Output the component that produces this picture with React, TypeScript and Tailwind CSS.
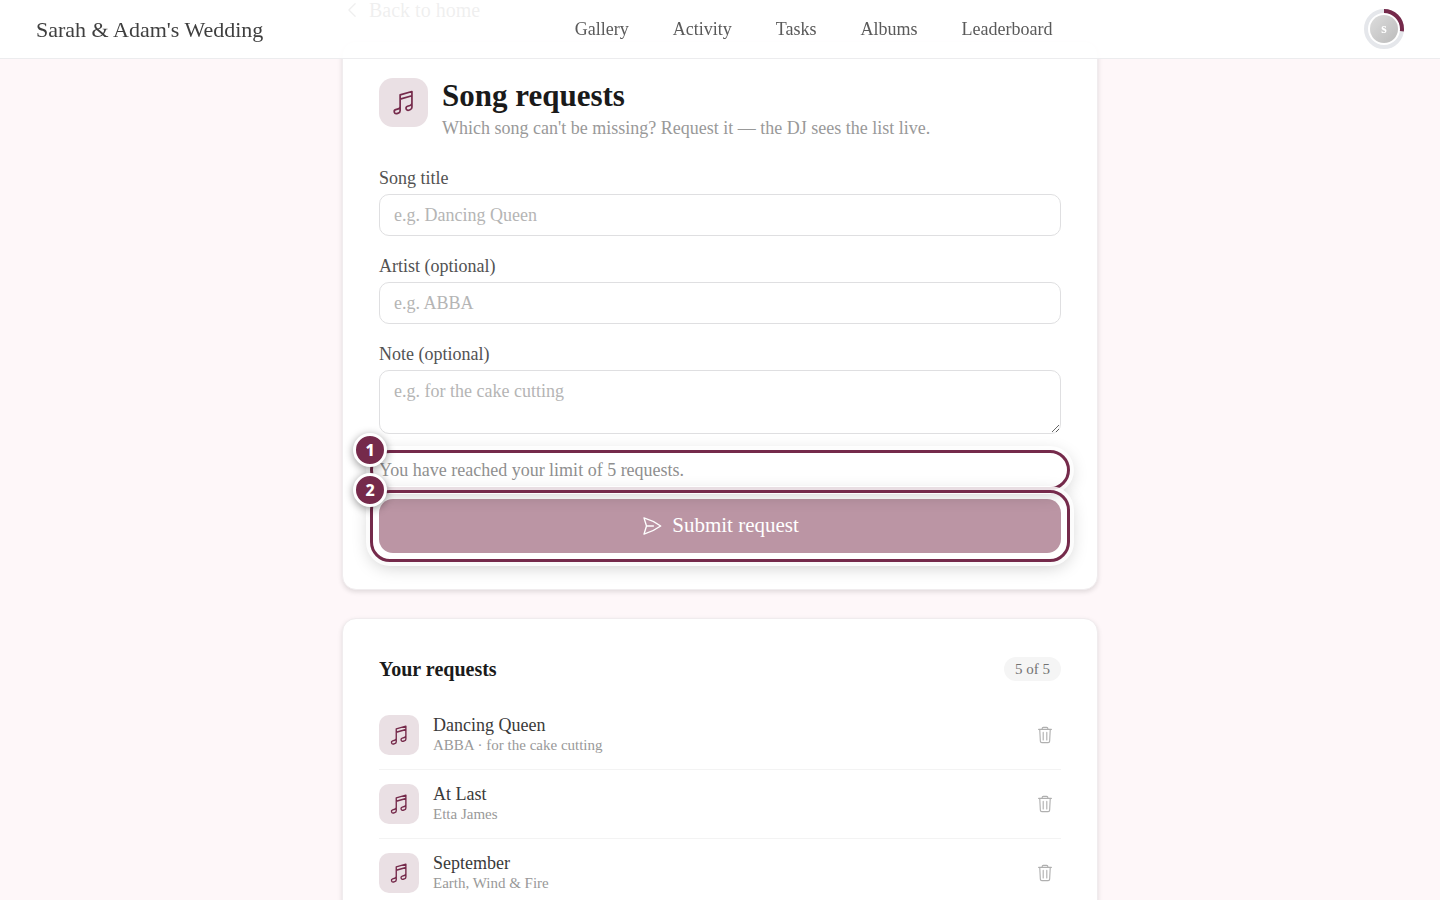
import React, { useState } from 'react';
import { HiOutlineChevronLeft, HiOutlineMusicalNote, HiOutlinePaperAirplane } from 'react-icons/hi2';

interface SongRequest {
    id: number;
    title: string;
    details: string;
}

const MAX_REQUESTS = 5;

const navItems = ['Gallery', 'Activity', 'Tasks', 'Albums', 'Leaderboard'];

const initialRequests: SongRequest[] = [
    { id: 1, title: 'Dancing Queen', details: 'ABBA · for the cake cutting' },
    { id: 2, title: 'At Last', details: 'Etta James' },
    { id: 3, title: 'September', details: 'Earth, Wind & Fire' },
];

const TrashIcon: React.FC<{ className?: string }> = ({ className }) => (
    <svg viewBox="0 0 24 24" fill="none" stroke="currentColor" strokeWidth={1.5} strokeLinecap="round" strokeLinejoin="round" className={className} aria-hidden="true">
        <path d="M3.5 4.5h17M8.2 4.5V3.4A1.6 1.6 0 0 1 9.8 1.8h4.4a1.6 1.6 0 0 1 1.6 1.6v1.1M5 4.5l.8 15.7a2 2 0 0 0 2 1.9h8.4a2 2 0 0 0 2-1.9L19 4.5M9.6 8.5v10M14.4 8.5v10" />
    </svg>
);

const ProfileBadge: React.FC = () => (
    <button type="button" aria-label="Profile" className="relative flex h-10 w-10 items-center justify-center">
        <svg viewBox="0 0 40 40" className="absolute inset-0 h-10 w-10 -rotate-90" aria-hidden="true">
            <circle cx="20" cy="20" r="18" fill="none" stroke="#e5e7eb" strokeWidth="4" />
            <circle cx="20" cy="20" r="18" fill="none" stroke="#752a4b" strokeWidth="4" pathLength={100} strokeDasharray="27 73" />
        </svg>
        <span className="flex h-7 w-7 items-center justify-center rounded-full bg-linear-to-br from-[#dddddd] to-[#bbbbbb] text-sm font-bold text-white">s</span>
    </button>
);

const Header: React.FC = () => (
    <header className="fixed inset-x-0 top-0 z-40 border-b border-[#ececee] bg-white/92">
        <div className="flex h-[58px] items-center justify-between px-9">
            <a href="#home" className="text-[22px] text-[#3f3f3f]">Sarah &amp; Adam's Wedding</a>
            <nav className="flex gap-11">
                {navItems.map(item => (
                    <a key={item} href={`#${item.toLowerCase()}`} className="text-lg text-[#5a5a5a]">{item}</a>
                ))}
            </nav>
            <ProfileBadge />
        </div>
    </header>
);

const Highlight: React.FC<{ step: number; className: string }> = ({ step, className }) => (
    <div className={`pointer-events-none absolute -inset-x-[9px] rounded-[20px] border-3 border-[#752a4b] shadow-[0_0_0_4px_rgba(255,255,255,0.85),0_4px_18px_rgba(0,0,0,0.22)] ${className}`}>
        <span className="absolute -top-5 -left-5 flex h-[34px] w-[34px] items-center justify-center rounded-full border-3 border-white bg-[#752a4b] font-['Noto_Sans',sans-serif] text-base font-extrabold text-white shadow-[0_2px_8px_rgba(0,0,0,0.4)]">
            {step}
        </span>
    </div>
);

const fieldClass = 'block w-full rounded-[10px] border border-[#dfdfe1] bg-white px-[14px] text-lg leading-6 text-[#3f3f3f] placeholder:text-[#b5b5b5] focus:outline-none focus:ring-2 focus:ring-[#752a4b]';
const labelClass = 'mb-1 block text-lg leading-6 text-[#525252]';
const cardClass = 'rounded-[14px] border border-[#f0ecee] bg-white p-9 shadow-[0_2px_5px_rgba(0,0,0,0.12)]';

const App: React.FC = () => {
    const [requests, setRequests] = useState(initialRequests);

    const handleDelete = (id: number) => {
        setRequests(requests.filter(request => request.id !== id));
    };

    return (
        <div className="h-screen overflow-hidden bg-[#fef7f9] font-['Liberation_Serif',serif]">
            <Header />
            <main className="mx-auto max-w-[756px]">
                <a href="#home" className="flex items-center gap-[7px] text-xl leading-5 text-[#333333]">
                    <HiOutlineChevronLeft className="h-5 w-5" />
                    Back to home
                </a>

                <section className={`mt-[21px] ${cardClass}`}>
                    <div className="flex items-start gap-[14px]">
                        <div className="flex h-[49px] w-[49px] items-center justify-center rounded-[14px] bg-[#eae0e4] text-[#752a4b]">
                            <HiOutlineMusicalNote className="h-[27px] w-[27px]" />
                        </div>
                        <div>
                            <h1 className="text-[31px] leading-9 font-bold text-[#1a1a1a]">Song requests</h1>
                            <p className="mt-[2px] text-lg leading-6 text-[#999999]">Which song can't be missing? Request it — the DJ sees the list live.</p>
                        </div>
                    </div>

                    <form className="mt-[26px]" onSubmit={e => e.preventDefault()}>
                        <div className="space-y-[18px]">
                            <div>
                                <label htmlFor="title" className={labelClass}>Song title</label>
                                <input id="title" type="text" placeholder="e.g. Dancing Queen" className={`h-[42px] ${fieldClass}`} />
                            </div>
                            <div>
                                <label htmlFor="artist" className={labelClass}>Artist (optional)</label>
                                <input id="artist" type="text" placeholder="e.g. ABBA" className={`h-[42px] ${fieldClass}`} />
                            </div>
                            <div>
                                <label htmlFor="note" className={labelClass}>Note (optional)</label>
                                <textarea id="note" placeholder="e.g. for the cake cutting" className={`h-16 resize-y py-2 ${fieldClass}`} />
                            </div>
                        </div>
                        <div className="relative mt-6">
                            <p className="text-lg leading-6 text-[#8f8f8f]">You have reached your limit of {MAX_REQUESTS} requests.</p>
                            <Highlight step={1} className="-inset-y-2 z-10" />
                        </div>
                        <div className="relative mt-[17px]">
                            <button type="submit" disabled className="flex h-[54px] w-full items-center justify-center gap-[9px] rounded-[14px] bg-[#bb95a4] text-[21px] text-white">
                                <HiOutlinePaperAirplane className="h-[22px] w-[22px]" />
                                Submit request
                            </button>
                            <Highlight step={2} className="-inset-y-[9px] z-20" />
                        </div>
                    </form>
                </section>

                <section className={`mt-7 ${cardClass}`}>
                    <div className="flex items-center justify-between">
                        <h2 className="text-xl font-bold text-[#1a1a1a]">Your requests</h2>
                        <span className="rounded-full bg-[#f5f5f5] px-[11px] text-[15px] leading-6 text-[#737373]">5 of {MAX_REQUESTS}</span>
                    </div>
                    <ul className="mt-[18px] divide-y divide-[#f3f3f3]">
                        {requests.map(request => (
                            <li key={request.id} className="flex items-center gap-[14px] py-[14px]">
                                <div className="flex h-10 w-10 items-center justify-center rounded-[10px] bg-[#eae0e4] text-[#752a4b]">
                                    <HiOutlineMusicalNote className="h-[22px] w-[22px]" />
                                </div>
                                <div className="flex-1">
                                    <p className="text-lg leading-5 text-[#3a3a3a]">{request.title}</p>
                                    <p className="text-[15px] leading-5 text-[#999999]">{request.details}</p>
                                </div>
                                <button type="button" aria-label={`Delete ${request.title}`} onClick={() => handleDelete(request.id)} className="p-[7px] text-[#b0b0b0]">
                                    <TrashIcon className="h-[18px] w-[18px]" />
                                </button>
                            </li>
                        ))}
                    </ul>
                </section>
            </main>
        </div>
    );
};

export default App;
